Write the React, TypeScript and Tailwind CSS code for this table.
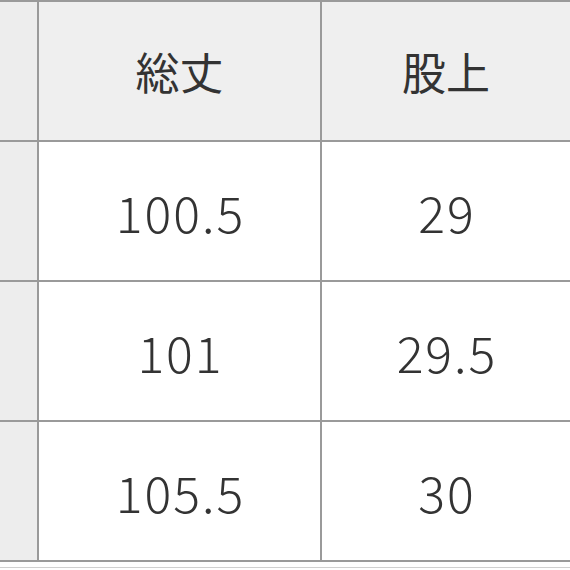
import React from 'react';

const rows = [
  { length: '100.5', rise: '29' },
  { length: '101', rise: '29.5' },
  { length: '105.5', rise: '30' },
];

const font = { fontFamily: '"Noto Sans CJK JP", "Liberation Sans", sans-serif' };

const App = () => {
  return (
    <div className="w-[570px] h-[570px] bg-white overflow-hidden text-[#333]" style={font}>
      <div className="grid grid-cols-[37px_281px_1fr] auto-rows-[138px] gap-[2px] bg-[#9a9a9a] py-[2px]">
        <div className="bg-[#ededed]" />
        <div className="bg-[#efefef] flex items-center justify-center text-[44px] leading-none pb-[1px]">総丈</div>
        <div className="bg-[#efefef] flex items-center justify-center text-[44px] leading-none pb-[1px]">股上</div>

        {rows.map((r) => (
          <React.Fragment key={r.length}>
            <div className="bg-[#ededed]" />
            <div className="bg-white flex items-center justify-center text-[50px] font-light leading-none tracking-[2px] pl-[2px]">{r.length}</div>
            <div className="bg-white flex items-center justify-center text-[50px] font-light leading-none tracking-[2px] pl-[2px]">{r.rise}</div>
          </React.Fragment>
        ))}
      </div>
      <div className="h-[5px] bg-white" />
      <div className="h-[1px] bg-[#d0d0d0]" />
    </div>
  );
};

export default App;
